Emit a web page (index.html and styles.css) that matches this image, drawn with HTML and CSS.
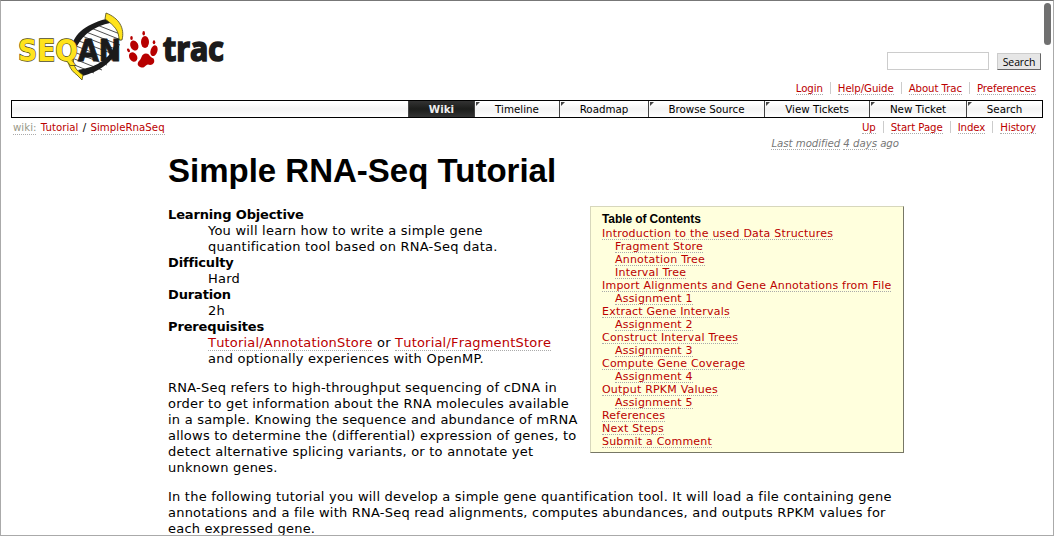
FILE: index.html
```
<!DOCTYPE html>
<html lang="en">
<head>
<meta charset="utf-8">
<title>Tutorial/SimpleRnaSeq</title>
<link rel="stylesheet" href="styles.css">
</head>
<body>
<div class="window">
  <header class="banner">
    <a class="logo">
      <svg width="216" height="72" viewBox="16 10 216 72">
        <path d="M107 19C86 26 73 38 73 56C75 68 80 72 82 75C103 70 118 54 121 38C120 28 114 22 107 19Z" fill="#fff"/>
        <path d="M97 25l23 9M91 28l30 12M86 32l34 13M82 36l36 14M79 41l37 14M76 46l36 14M74 52l33 13M72 58l30 12M72 64l22 9" stroke="#222" stroke-width=".8"/>
        <path d="M110 18C88 23 73 33 72 48L77 46C84 33 96 26 110 23ZM78 70C98 67 110 58 114 46L119 46C114 62 99 72 82 76Z" fill="#1b1b1b"/>
        <path d="M106 13C119 18 125 28 122 40L119 40C119 31 115 26 105 19Z" fill="#ffe31c" stroke="#4c4818" stroke-width=".8"/>
        <path d="M70 55C66 62 70 70 77 75L82 80L83 75C75 70 72 64 74 55Z" fill="#ffe31c" stroke="#4c4818" stroke-width=".8"/>
        <text class="logo-seq" x="18" y="61" textLength="60" lengthAdjust="spacingAndGlyphs">SEQ</text>
        <text class="logo-an" x="78" y="61" textLength="43" lengthAdjust="spacingAndGlyphs">AN</text>
        <g fill="#b70000">
          <ellipse cx="134.300" cy="45.500" rx="3.900" ry="5.200" transform="rotate(-25 134.300 45.500)"/>
          <ellipse cx="145" cy="42" rx="4" ry="6"/>
          <ellipse cx="154" cy="50.700" rx="3.400" ry="5.500" transform="rotate(18 154 50.700)"/>
          <ellipse cx="133.200" cy="57" rx="3.900" ry="5" transform="rotate(-32 133.200 57)"/>
          <path d="M139 61C142 59 141 53.500 146 53.500C150 53.500 149 57 153.500 58.500C156 63 152 66 148 64.500C145 65 145 68 141.500 67.500C137 66.500 137 63 139 61Z"/>
          <ellipse cx="131.500" cy="38" rx="1.300" ry="2"/>
          <ellipse cx="143.700" cy="33.300" rx="1.300" ry="2.200"/>
          <ellipse cx="154" cy="42.300" rx="1.300" ry="2"/>
          <ellipse cx="128.500" cy="50.300" rx="1.300" ry="2" transform="rotate(-30 128.500 50.300)"/>
        </g>
        <text class="logo-trac" x="163" y="61" textLength="61" lengthAdjust="spacingAndGlyphs">trac</text>
      </svg>
    </a>
    <form class="search"><input type="text" class="search-box"><button type="button" class="search-button">Search</button></form>
  </header>
  <ul class="metanav">
    <li><a>Login</a></li><li><a>Help/Guide</a></li><li><a>About Trac</a></li><li><a>Preferences</a></li>
  </ul>
  <ul class="mainnav">
    <li class="active">Wiki</li><li class="t2">Timeline</li><li class="t3">Roadmap</li><li class="t4">Browse Source</li><li class="t5">View Tickets</li><li class="t6">New Ticket</li><li class="t7">Search</li>
  </ul>
  <div class="context">
    <div class="path"><a class="first">wiki:</a> <a>Tutorial</a> <span class="sep">/</span> <a>SimpleRnaSeq</a></div>
    <ul class="metanav ctxnav">
      <li><a>Up</a></li><li><a>Start Page</a></li><li><a>Index</a></li><li><a>History</a></li>
    </ul>
  </div>
  <main class="page">
    <p class="modified"><a>Last modified</a> <a>4 days</a> ago</p>
    <h1>Simple RNA-Seq Tutorial</h1>
    <div class="intro">
      <div class="lead">
        <dl>
          <dt>Learning Objective</dt>
          <dd>You will learn how to write a simple gene<br>quantification tool based on RNA-Seq data.</dd>
          <dt>Difficulty</dt><dd>Hard</dd>
          <dt>Duration</dt><dd>2h</dd>
          <dt>Prerequisites</dt>
          <dd><a>Tutorial/AnnotationStore</a> or <a>Tutorial/FragmentStore</a><br>and optionally experiences with OpenMP.</dd>
        </dl>
        <p>RNA-Seq refers to high-throughput sequencing of cDNA in<br>order to get information about the RNA molecules available<br>in a sample. Knowing the sequence and abundance of mRNA<br>allows to determine the (differential) expression of genes, to<br>detect alternative splicing variants, or to annotate yet<br>unknown genes.</p>
      </div>
      <nav class="toc">
        <h4>Table of Contents</h4>
        <ol>
          <li><a>Introduction to the used Data Structures</a>
            <ol><li><a>Fragment Store</a></li><li><a>Annotation Tree</a></li><li><a>Interval Tree</a></li></ol></li>
          <li><a>Import Alignments and Gene Annotations from File</a>
            <ol><li><a>Assignment 1</a></li></ol></li>
          <li><a>Extract Gene Intervals</a>
            <ol><li><a>Assignment 2</a></li></ol></li>
          <li><a>Construct Interval Trees</a>
            <ol><li><a>Assignment 3</a></li></ol></li>
          <li><a>Compute Gene Coverage</a>
            <ol><li><a>Assignment 4</a></li></ol></li>
          <li><a>Output RPKM Values</a>
            <ol><li><a>Assignment 5</a></li></ol></li>
          <li><a>References</a></li>
          <li><a>Next Steps</a></li>
          <li><a>Submit a Comment</a></li>
        </ol>
      </nav>
    </div>
    <p>In the following tutorial you will develop a simple gene quantification tool. It will load a file containing gene<br>annotations and a file with RNA-Seq read alignments, computes abundances, and outputs RPKM values for<br>each expressed gene.</p>
  </main>
  <div class="scrollbar"></div>
</div>
</body>
</html>
```
FILE: styles.css
```
* { box-sizing: border-box; }
body { margin: 0; background: #fff; color: #000; font: 13px/16px Verdana, "DejaVu Sans", sans-serif; }
ul, ol, dl, dd, p, h1, h4 { margin: 0; padding: 0; }
ul, ol { list-style: none; }
a { color: #b00; border-bottom: 1px dotted #aaa; }
.window { position: relative; width: 1054px; height: 536px; overflow: hidden; padding: 0 10px; border: 1px solid #aaa; border-top-color: #777; }
.banner { display: flex; justify-content: space-between; height: 80px; padding: 9px 2px 0 5px; }
.logo { border: 0; }
.logo svg { display: block; }
.logo-seq { font: bold 29.500px "DejaVu Sans", sans-serif; fill: #ffe31c; stroke: #4c4818; stroke-width: 1.4px; paint-order: stroke; }
.logo-an { font: bold 29.500px "DejaVu Sans", sans-serif; fill: #1b1b1b; stroke: #1b1b1b; stroke-width: 1px; }
.logo-trac { font: bold 33.500px "Open Sans", sans-serif; fill: #1b1b1b; stroke: #1b1b1b; stroke-width: 1.700px; }
.search { display: flex; gap: 8px; padding-top: 42px; }
.search-box { width: 102px; height: 18px; border: 1px solid #ccc; padding: 0; }
.search-button { width: 44px; height: 17px; padding: 0; margin-top: 1px; border: 1px solid #ccc; border-right-color: #666; border-bottom-color: #666; background: #e6e6e6; color: #000; font: 500 10.500px/14px "Open Sans", sans-serif; letter-spacing: -.1px; }
.metanav { display: flex; justify-content: flex-end; height: 19px; padding: 1px 0 0; font-size: 10.200px; line-height: 14px; }
.metanav li { height: 12px; padding: 0 7px; border-left: 1px solid #ccc; white-space: nowrap; letter-spacing: -.08px; }
.metanav li:first-child { border: 0; }
.metanav a { display: block; height: 13px; }
.mainnav { display: flex; justify-content: flex-end; width: 1032px; height: 18px; border: 1px solid #000; background: linear-gradient(#fff 10%, #f3f3f3 50%, #fff); font-size: 10.300px; line-height: 17px; text-align: center; }
.mainnav li { position: relative; border-left: 1px solid #444; white-space: nowrap; }
.mainnav li:not(.active)::before { content: ""; position: absolute; left: 1px; top: 1px; border-top: 4px solid #444; border-right: 4px solid transparent; }
.mainnav .active { width: 66px; background: linear-gradient(#333, #1c1d1b 50%, #333); color: #eee; font-weight: bold; }
.t2 { width: 85px; } .t3 { width: 89px; } .t4 { width: 116px; } .t5 { width: 105px; } .t6 { width: 97px; } .t7 { width: 76px; }
.context { display: flex; justify-content: space-between; height: 19px; padding: 2px 0 0 2px; }
.path { font-size: 10.200px; line-height: 16px; word-spacing: 1px; letter-spacing: .03px; }
.path a { display: inline-block; height: 14px; line-height: 14px; }
.path .first { color: #998; }
.ctxnav { padding-top: 1px; }
.page { width: 736px; margin-left: 157px; letter-spacing: .22px; white-space: nowrap; }
.modified { height: 14px; padding-right: 5px; text-align: right; font-size: 10.200px; line-height: 13px; letter-spacing: -.03px; font-style: italic; color: #777; }
.modified a { display: inline-block; height: 13px; color: #777; }
h1 { height: 55px; font: bold 33px/40px "Liberation Sans", Arial, sans-serif; letter-spacing: 0; }
.intro { display: flex; justify-content: space-between; }
.lead { padding-top: 1px; }
dt { font-weight: bold; letter-spacing: -.15px; }
dd { margin-left: 40px; }
dd a { display: inline-block; height: 16px; font-kerning: none; letter-spacing: .19px; }
.lead p { margin: 13px 0; }
.toc { width: 314px; height: 247px; padding: 5px 11px; border: 1px solid #d7d7bc; border-right-color: #776; border-bottom-color: #776; background: #ffd; font-size: 11px; line-height: 13px; letter-spacing: .21px; }
.toc h4 { height: 15px; font: bold 12px/15px "Liberation Sans", Arial, sans-serif; letter-spacing: -.1px; }
.toc li li { padding-left: 13px; }
.toc a { display: inline-block; height: 13px; vertical-align: top; }
.scrollbar { position: absolute; right: 2px; top: 2px; width: 7px; height: 42px; border-radius: 4px; background: #707070; }
```
